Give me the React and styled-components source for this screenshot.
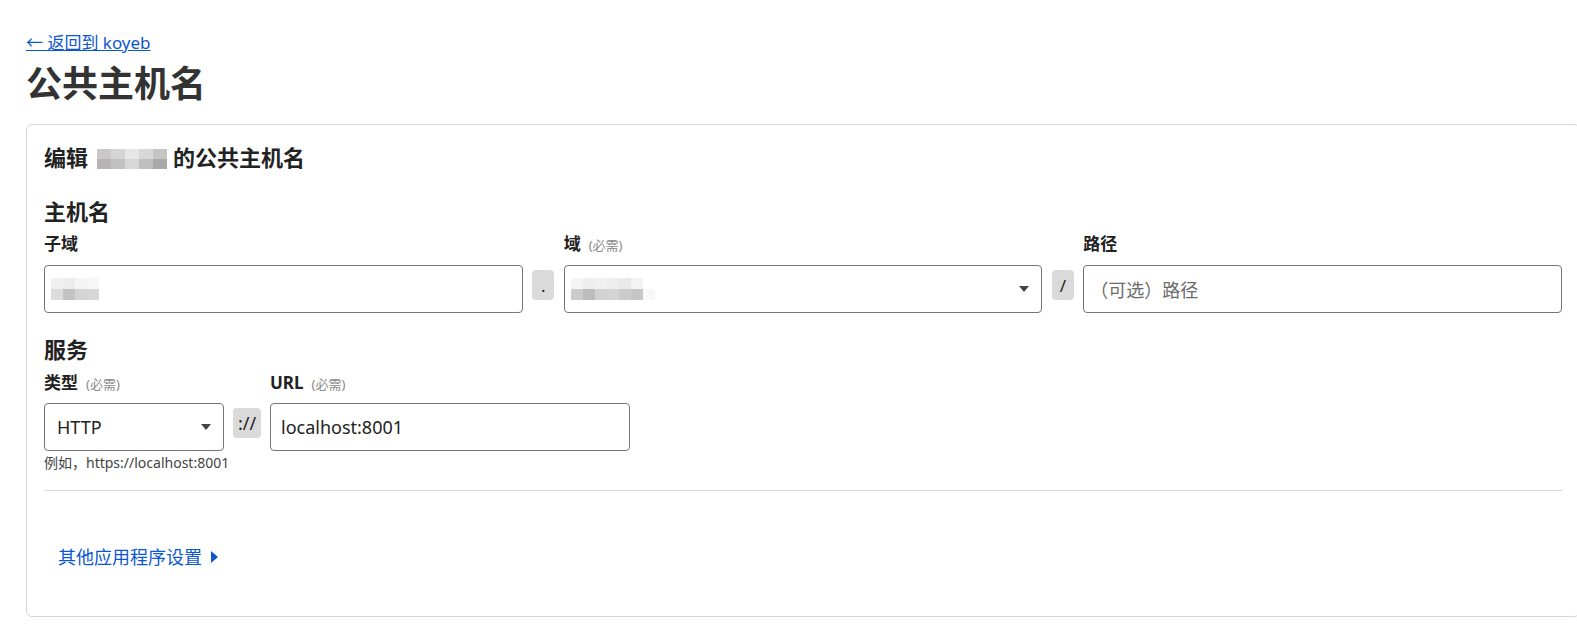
import React from "react";
import styled, { createGlobalStyle } from "styled-components";

const Global = createGlobalStyle`
  html, body { margin: 0; padding: 0; background: #fff; overflow: hidden; }
  body {
    font-family: "Noto Sans", "Noto Sans CJK SC", sans-serif;
    color: #222;
  }
`;

const Page = styled.div`
  padding: 32px 0 0 26px;
  width: 1600px;
`;

const BackLink = styled.a`
  display: inline-block;
  font-size: 17px;
  line-height: 22px;
  color: #0b57d0;
  text-decoration: underline;
  cursor: pointer;
`;

const Title = styled.h1`
  margin: 6px 0 16px;
  font-size: 36px;
  line-height: 48px;
  font-weight: 700;
  color: #333;
`;

const Card = styled.section`
  box-sizing: border-box;
  width: 1554px;
  border: 1px solid #d6d6d6;
  border-radius: 6px;
  padding: 17px 17px 46px 17px;
`;

const CardTitle = styled.h2`
  margin: 0;
  font-size: 22px;
  line-height: 30px;
  font-weight: 700;
  color: #222;
  white-space: nowrap;
`;

/* pixelated, blurred placeholder for redacted text */
const Pixels = styled.span`
  display: inline-flex;
  flex-direction: column;
  vertical-align: middle;
  margin: ${(p) => p.$m || "0"};
  filter: blur(0.7px);
`;

const PixelRow = styled.span`
  display: flex;
`;

const Cell = styled.span`
  display: block;
  width: ${(p) => p.$w}px;
  height: ${(p) => p.$h}px;
  background: ${(p) => p.$c};
`;

function Redacted({ rows, w, h, m }) {
  return (
    <Pixels $m={m}>
      {rows.map((r, i) => (
        <PixelRow key={i}>
          {r.map((c, j) => (
            <Cell key={j} $w={w} $h={h} $c={c} />
          ))}
        </PixelRow>
      ))}
    </Pixels>
  );
}

const SectionTitle = styled.h3`
  margin: ${(p) => p.$top}px 0 ${(p) => p.$bottom || 7}px;
  font-size: 22px;
  line-height: 30px;
  font-weight: 700;
  color: #222;
`;

const HostGrid = styled.div`
  display: grid;
  grid-template-columns: 1fr 22px 1fr 22px 1fr;
  column-gap: 9.5px;
  row-gap: 9px;
  align-items: start;
`;

const Label = styled.label`
  display: flex;
  align-items: baseline;
  gap: 8px;
  font-size: 17px;
  line-height: 22px;
  font-weight: 700;
  color: #222;
  grid-column: ${(p) => p.$col || "auto"};
`;

const Required = styled.span`
  font-size: 13px;
  font-weight: 400;
  color: #8a8a8a;
`;

const Field = styled.div`
  box-sizing: border-box;
  height: 48px;
  width: 100%;
  border: 1px solid #767676;
  border-radius: 4px;
  display: flex;
  align-items: center;
  justify-content: space-between;
  padding: 0 ${(p) => p.$pr ?? 12}px 0 ${(p) => p.$pl ?? 12}px;
  font-size: 18px;
  color: ${(p) => (p.$placeholder ? "#6b6b6b" : "#222")};
  background: #fff;
`;

const Caret = styled.span`
  width: 0;
  height: 0;
  border-left: 5px solid transparent;
  border-right: 5px solid transparent;
  border-top: 6px solid #444;
`;

const Sep = styled.div`
  box-sizing: border-box;
  margin-top: 5px;
  height: 30px;
  width: ${(p) => p.$w || 22}px;
  background: #dadada;
  border-radius: 4px;
  display: flex;
  align-items: center;
  justify-content: center;
  font-size: ${(p) => p.$fs || 17}px;
  color: #222;
`;

const ServiceRow = styled.div`
  display: grid;
  grid-template-columns: 180px 28px 360px;
  column-gap: 9px;
  row-gap: 8px;
  align-items: start;
`;

const Hint = styled.div`
  grid-column: 1 / span 3;
  margin-top: -5px;
  font-size: 14px;
  line-height: 18px;
  color: #444;
  white-space: nowrap;
`;

const Divider = styled.hr`
  margin: 18px 0 0;
  border: 0;
  border-top: 1px solid #d9d9d9;
`;

const MoreLink = styled.a`
  display: inline-flex;
  align-items: center;
  gap: 9px;
  margin: 53px 0 0 14px;
  font-size: 18px;
  line-height: 26px;
  color: #0b57d0;
  cursor: pointer;
`;

const Triangle = styled.span`
  width: 0;
  height: 0;
  border-top: 6px solid transparent;
  border-bottom: 6px solid transparent;
  border-left: 7px solid #0b57d0;
`;

const headingBlob = [
  ["#c9c7c7", "#d6d5d5", "#e6e6e6", "#d9d8d8", "#c4c4c4"],
  ["#b5b3b3", "#c2c1c1", "#d7d7d7", "#bfbfbf", "#a9a9a9"],
];
const subBlob = [
  ["#f0f0f0", "#ececec", "#f4f4f4", "#f7f7f7", "#ffffff"],
  ["#dcdcdc", "#c3c3c3", "#d4d4d4", "#d6d6d6", "#ffffff"],
];
const domainBlob = [
  ["#f4f4f4", "#eeeeee", "#f0f0f0", "#eeeeee", "#e9e9e9", "#f3f3f3", "#ffffff"],
  ["#cdcaca", "#bcbcbc", "#d1d1d1", "#d4d4d4", "#cbcbcb", "#c6c6c6", "#f8f8f8"],
];

export default function App() {
  return (
    <>
      <Global />
      <Page>
        <BackLink>← 返回到 koyeb</BackLink>
        <Title>公共主机名</Title>
        <Card>
          <CardTitle>
            编辑<Redacted rows={headingBlob} w={14} h={10} m="-3px 6px 0 9px" />的公共主机名
          </CardTitle>

          <SectionTitle $top={24}>主机名</SectionTitle>
          <HostGrid>
            <Label $col="1">子域</Label>
            <Label $col="3">
              域<Required>(必需)</Required>
            </Label>
            <Label $col="5">路径</Label>

            <Field $pl={6}>
              <Redacted rows={subBlob} w={12} h={11} />
            </Field>
            <Sep>.</Sep>
            <Field $pl={6} $pr={12}>
              <Redacted rows={domainBlob} w={12} h={11} />
              <Caret />
            </Field>
            <Sep>/</Sep>
            <Field $placeholder $pl={6}>（可选）路径</Field>
          </HostGrid>

          <SectionTitle $top={21} $bottom={8}>服务</SectionTitle>
          <ServiceRow>
            <Label>
              类型<Required>(必需)</Required>
            </Label>
            <span />
            <Label>
              URL<Required>(必需)</Required>
            </Label>

            <Field $pr={12}>
              HTTP
              <Caret />
            </Field>
            <Sep $w={28} $fs={18}>://</Sep>
            <Field $pl={10}>localhost:8001</Field>

            <Hint>例如，https://localhost:8001</Hint>
          </ServiceRow>

          <Divider />

          <MoreLink>
            其他应用程序设置
            <Triangle />
          </MoreLink>
        </Card>
      </Page>
    </>
  );
}
